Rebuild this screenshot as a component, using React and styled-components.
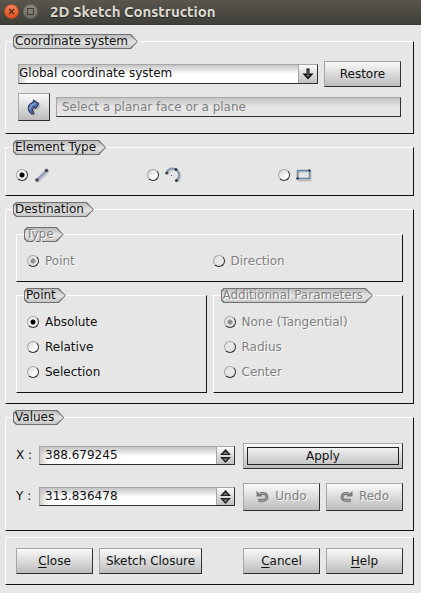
import React, { useState } from "react";
import styled, { createGlobalStyle, css } from "styled-components";

const GlobalStyle = createGlobalStyle`
  *, *::before, *::after { box-sizing: border-box; }
  body {
    margin: 0;
    background: #e6e6e6;
    color: #111;
    font: 12px/15px "DejaVu Sans", sans-serif;
  }
  button, input, select { font: inherit; color: inherit; margin: 0; border-radius: 0; }
`;

const sunken = css`
  border: 1px solid;
  border-color: #a6a6a6 #303030 #303030 #a6a6a6;
`;

const face = css`
  ${sunken}
  background: linear-gradient(#fafafa, #bcbcbc);
`;

const well = css`
  ${sunken}
  background: linear-gradient(#c4c4c4, rgba(255, 255, 255, 0) 9px),
    linear-gradient(90deg, #d0d0d0, #fff 9px);
`;

const etched = css`
  color: #808080;
  text-shadow: 1px 1px 0 #fafafa;
`;

const Dialog = styled.main`
  display: flex;
  flex-direction: column;
`;

const TitleBar = styled.header`
  display: flex;
  align-items: center;
  gap: 4px;
  height: 25px;
  padding: 0 4px 2px;
  background: linear-gradient(#5a564e, #3e3d38);
`;

const WindowButton = styled.button`
  display: flex;
  align-items: center;
  justify-content: center;
  width: 15px;
  height: 15px;
  padding: 0;
  border: 1px solid ${(p) => (p.$close ? "#b54722" : "#6e6b63")};
  && { border-radius: 50%; }
  background: ${(p) =>
    p.$close ? "linear-gradient(#f5825b, #e2511f)" : "linear-gradient(#8b8880, #737068)"};
`;

const Title = styled.h1`
  margin: 0 0 0 8px;
  color: #dfdbd2;
  font: bold 15px/20px Ubuntu, "Open Sans", sans-serif;
  text-shadow: 0 1px 1px #222;
`;

const Body = styled.form`
  display: flex;
  flex-direction: column;
  gap: 6px;
  padding: 9px 7px 8px 5px;
`;

const frame = css`
  border: 1px solid;
  border-color: #fff #111 #111 #fff;
`;

const Group = styled.fieldset`
  ${frame}
  min-width: 0;
  margin: 0;
  padding: ${(p) => p.$pad || 10}px;
`;

const Legend = styled.legend`
  position: relative;
  z-index: 0;
  height: 15px;
  margin-left: ${(p) => -(p.$pad || 10) + 7}px;
  padding: 0 10px 0 2px;
  line-height: 14px;
  ${(p) => p.$muted && etched}

  &::before, &::after {
    content: "";
    position: absolute;
    z-index: -1;
    inset: 0;
    background: #707070;
    clip-path: polygon(3px 0, calc(100% - 7px) 0, 100% 50%, calc(100% - 7px) 100%, 3px 100%, 0 calc(100% - 3px), 0 3px);
  }
  &::after {
    inset: 1px;
    background: linear-gradient(#bcbcbc, #e4e4e4 55%, #c6c6c6);
  }
`;

const Stack = styled.div`
  display: flex;
  flex-direction: column;
  gap: 6px;
`;

const Row = styled.div`
  display: flex;
  align-items: center;
  gap: 6px;
`;

const Columns = styled.div`
  display: grid;
  grid-template-columns: repeat(${(p) => p.$count}, minmax(0, 1fr));
  gap: 6px;
`;

const Button = styled.button`
  ${face}
  display: flex;
  align-items: center;
  justify-content: center;
  gap: 6px;
  width: ${(p) => p.$width || 77}px;
  height: ${(p) => p.$height || 26}px;
  padding: 0;
  white-space: nowrap;
  &:disabled { ${etched} }
`;

const DefaultButton = styled(Button)`
  width: 100%;
  padding: 3px;
`;

const DefaultRing = styled.span`
  flex: 1;
  height: 18px;
  border: 1px solid #222;
  line-height: 16px;
`;

const SelectBox = styled.div`
  ${well}
  display: grid;
  grid-template-columns: 1fr 19px;
  flex: 1;
  height: 20px;
`;

const Select = styled.select`
  grid-area: 1 / 1 / 2 / 3;
  appearance: none;
  width: 100%;
  padding: 0 20px 2px 0;
  border: 0;
  background: none;
`;

const SelectArrow = styled.span`
  grid-area: 1 / 2;
  display: flex;
  align-items: center;
  justify-content: center;
  border-left: 1px solid #a6a6a6;
  background: linear-gradient(#fafafa, #c0c0c0);
  pointer-events: none;
`;

const FaceInput = styled.input`
  ${sunken}
  flex: 1;
  min-width: 0;
  height: 20px;
  padding: 0 5px 1px;
  background: linear-gradient(#c4c4c4, #e6e6e6 9px);
  &::placeholder { color: #808080; opacity: 1; }
`;

const Option = styled.label`
  display: flex;
  align-items: ${(p) => (p.$icon ? "center" : "flex-start")};
  gap: 6px;
  height: ${(p) => (p.$icon ? 20 : 19)}px;
  line-height: 18px;
  ${(p) => p.$muted && etched}
`;

const Radio = styled.input`
  ${sunken}
  && { border-radius: 50%; }
  appearance: none;
  flex: none;
  width: 12px;
  height: 12px;
  margin: ${(p) => (p.$icon ? 0 : 3)}px 0 0;
  background: linear-gradient(135deg, #d4d4d4, #fff 70%);
  &:disabled { background: #e6e6e6; }
  &:checked { background: radial-gradient(circle, #000 2px, #f0f0f0 3px); }
  &:checked:disabled { background: radial-gradient(circle, #909090 2px, #e6e6e6 3px); }
`;

const Values = styled.div`
  display: grid;
  grid-template-columns: minmax(0, 219fr) minmax(0, 160fr);
  grid-template-rows: 41px 41px;
  column-gap: 8px;
  align-items: center;
  padding-bottom: 3px;
`;

const Field = styled.div`
  display: grid;
  grid-template-columns: 23px 1fr;
  align-items: center;
`;

const Spin = styled.div`
  ${well}
  display: flex;
  height: 19px;
`;

const SpinInput = styled.input`
  flex: 1;
  min-width: 0;
  padding: 0 5px 1px;
  border: 0;
  background: none;
`;

const SpinButtons = styled.div`
  display: flex;
  flex-direction: column;
  width: 18px;
  border-left: 1px solid #a6a6a6;
  background: linear-gradient(#fafafa, #c0c0c0);
`;

const SpinButton = styled.button`
  display: flex;
  justify-content: center;
  align-items: ${(p) => (p.$down ? "flex-start" : "flex-end")};
  flex: 1;
  padding: 0;
  border: 0;
  background: none;
`;

const Actions = styled.footer`
  ${frame}
  display: flex;
  gap: 6px;
  padding: 10px;
`;

const Spacer = styled.span`
  flex: 1;
`;

const Key = styled.span`
  text-decoration: underline;
  text-underline-offset: 2px;
`;

const CloseIcon = () => (
  <svg width="7" height="7" viewBox="0 0 7 7" aria-hidden="true">
    <path d="M1 1l5 5M6 1L1 6" stroke="#4b2a1c" strokeWidth="1.2" />
  </svg>
);

const MaximizeIcon = () => (
  <svg width="7" height="7" viewBox="0 0 7 7" aria-hidden="true">
    <rect x="0.5" y="0.5" width="6" height="6" fill="none" stroke="#3b3a36" />
  </svg>
);

const DownArrowIcon = () => (
  <svg width="12" height="12" viewBox="0 0 12 12" aria-hidden="true">
    <path d="M4.500 .5h3v5h4L6 11.500 .5 5.500h4z" fill="#111" />
    <path d="M5.500 2h1v5h1.500L6 9 4 7h1.500z" fill="#777" />
  </svg>
);

const PickIcon = () => (
  <svg width="16" height="18" viewBox="0 0 16 18" aria-hidden="true">
    <path d="M6 17C0 12 2 6 8 5V2l6 5-4 5V9c-2 1-3 4-1 7z" transform="translate(1 1)" fill="#888" opacity=".45" />
    <path d="M5.500 16C1 13 1 5.500 7 4.500L7.500 2 13 5.500 9.500 11 8.500 9C6 10 6.500 13 8 15.500z" fill="#4d68a8" stroke="#262c44" />
    <path d="M4 11.500C4 8 6 6 10 5.500" fill="none" stroke="#86a0d6" strokeWidth="1.500" />
  </svg>
);

const LineIcon = () => (
  <svg width="16" height="16" viewBox="0 0 16 16" aria-hidden="true">
    <g strokeLinecap="round">
      <path d="M4 14.500L14 4.500" stroke="#cacaca" strokeWidth="3" />
      <path d="M3 13L12.500 3.500" stroke="#8fa3b9" strokeWidth="2.500" />
    </g>
    <circle cx="3" cy="13" r="1.800" fill="#454b54" />
    <circle cx="12.500" cy="3.500" r="1.800" fill="#454b54" />
  </svg>
);

const ArcIcon = () => (
  <svg width="18" height="16" viewBox="0 0 18 16" aria-hidden="true">
    <path d="M3 7C5 1 13 1 15 7c1 3 0 5-2 8" fill="none" stroke="#c6c6c6" strokeWidth="2" />
    <path d="M1.500 6C3.500 0 10 .5 12.500 4c2.500 3 2 6-.500 9" fill="none" stroke="#819bb6" strokeWidth="2" />
    <circle cx="1.800" cy="6" r="1.600" fill="#3c424b" />
    <circle cx="11" cy="2.500" r="1.600" fill="#3c424b" />
    <circle cx="11.500" cy="13.500" r="1.600" fill="#3c424b" />
    <path d="M6 8h1v1H6z" fill="#444" />
  </svg>
);

const RectangleIcon = () => (
  <svg width="16" height="16" viewBox="0 0 16 16" aria-hidden="true">
    <path d="M2.500 4.500h12v9h-12z" fill="none" stroke="#c0c0c0" strokeWidth="2" />
    <path d="M1.500 3.500h12v8h-12z" fill="none" stroke="#6685a8" strokeWidth="1.500" />
    <circle cx="13.500" cy="3.500" r="1.200" fill="#333b46" />
    <circle cx="1.500" cy="11.500" r="1.200" fill="#333b46" />
  </svg>
);

const CurlIcon = ({ redo }) => (
  <svg width="13" height="13" viewBox="0 0 13 13" aria-hidden="true">
    <g transform={redo ? "matrix(-1 0 0 1 13 0)" : undefined} fill="none">
      <path d="M3 12C8 13.500 12.300 11 12.300 7" stroke="#b8b8b8" />
      <path d="M2 10.300H7C12 10 12 3.500 7 3.500H4" stroke="#7a7a7a" strokeWidth="3" />
      <path d="M.500 1v5.500H7L5 4.500z" fill="#7a7a7a" />
      <path d="M2.500 10.300H7C11.500 10 11.500 3.500 7 3.500H3" stroke="#a6a6a6" />
    </g>
  </svg>
);

const Triangle = ({ down }) => (
  <svg width="11" height="8" viewBox="0 0 11 8" aria-hidden="true">
    <path d={down ? "M0 1h11L5.500 7z" : "M5.500 1L11 7H0z"} fill="#222" />
    <path d={down ? "M3 2.500h5L5.500 5z" : "M5.500 3.500L8 6H3z"} fill="#777" />
  </svg>
);

function RadioOption({ name, label, icon, checked, onPick, muted }) {
  return (
    <Option $icon={!!icon} $muted={muted}>
      <Radio
        type="radio"
        name={name}
        $icon={!!icon}
        aria-label={icon ? label : undefined}
        checked={checked}
        onChange={() => onPick(label)}
        disabled={muted}
      />
      {icon || label}
    </Option>
  );
}

function RadioSet({ name, options, initial, muted }) {
  const [value, setValue] = useState(initial);
  return options.map(({ label, icon }) => (
    <RadioOption
      key={label}
      name={name}
      label={label}
      icon={icon}
      muted={muted}
      checked={label === value}
      onPick={setValue}
    />
  ));
}

function Coordinate({ id, label, initial }) {
  const [value, setValue] = useState(initial);
  const step = (n) => setValue((v) => (parseFloat(v) + n).toFixed(6));
  return (
    <Field>
      <label htmlFor={id}>{label} :</label>
      <Spin>
        <SpinInput id={id} type="text" value={value} onChange={(e) => setValue(e.target.value)} />
        <SpinButtons>
          <SpinButton type="button" aria-label={`Increase ${label}`} onClick={() => step(1)}>
            <Triangle />
          </SpinButton>
          <SpinButton type="button" $down aria-label={`Decrease ${label}`} onClick={() => step(-1)}>
            <Triangle down />
          </SpinButton>
        </SpinButtons>
      </Spin>
    </Field>
  );
}

const elementTypes = [
  { label: "Line", icon: <LineIcon /> },
  { label: "Arc", icon: <ArcIcon /> },
  { label: "Rectangle", icon: <RectangleIcon /> },
];
const types = [{ label: "Point" }, { label: "Direction" }];
const points = [{ label: "Absolute" }, { label: "Relative" }, { label: "Selection" }];
const parameters = [{ label: "None (Tangential)" }, { label: "Radius" }, { label: "Center" }];

export default function App() {
  return (
    <>
      <GlobalStyle />
      <Dialog>
        <TitleBar>
          <WindowButton type="button" $close aria-label="Close window">
            <CloseIcon />
          </WindowButton>
          <WindowButton type="button" aria-label="Maximize window">
            <MaximizeIcon />
          </WindowButton>
          <Title>2D Sketch Construction</Title>
        </TitleBar>
        <Body onSubmit={(e) => e.preventDefault()}>
          <Group $pad={12}>
            <Legend $pad={12}>Coordinate system</Legend>
            <Stack>
              <Row>
                <SelectBox>
                  <Select aria-label="Coordinate system">
                    <option>Global coordinate system</option>
                  </Select>
                  <SelectArrow>
                    <DownArrowIcon />
                  </SelectArrow>
                </SelectBox>
                <Button type="button">Restore</Button>
              </Row>
              <Row>
                <Button type="button" $width={32} $height={28} aria-label="Pick face">
                  <PickIcon />
                </Button>
                <FaceInput
                  type="text"
                  readOnly
                  aria-label="Planar face"
                  placeholder="Select a planar face or a plane"
                />
              </Row>
            </Stack>
          </Group>

          <Group>
            <Legend>Element Type</Legend>
            <Columns $count={3}>
              <RadioSet name="element" options={elementTypes} initial="Line" />
            </Columns>
          </Group>

          <Group>
            <Legend>Destination</Legend>
            <Stack>
              <Group disabled>
                <Legend $muted>Type</Legend>
                <Columns $count={2}>
                  <RadioSet name="type" options={types} initial="Point" muted />
                </Columns>
              </Group>
              <Columns $count={2}>
                <Group>
                  <Legend>Point</Legend>
                  <Stack>
                    <RadioSet name="point" options={points} initial="Absolute" />
                  </Stack>
                </Group>
                <Group disabled>
                  <Legend $muted>Additionnal Parameters</Legend>
                  <Stack>
                    <RadioSet
                      name="parameter"
                      options={parameters}
                      initial="None (Tangential)"
                      muted
                    />
                  </Stack>
                </Group>
              </Columns>
            </Stack>
          </Group>

          <Group>
            <Legend>Values</Legend>
            <Values>
              <Coordinate id="x-value" label="X" initial="388.679245" />
              <DefaultButton type="submit">
                <DefaultRing>Apply</DefaultRing>
              </DefaultButton>
              <Coordinate id="y-value" label="Y" initial="313.836478" />
              <Columns $count={2}>
                <Button type="button" $height={28} disabled>
                  <CurlIcon />
                  Undo
                </Button>
                <Button type="button" $height={28} disabled>
                  <CurlIcon redo />
                  Redo
                </Button>
              </Columns>
            </Values>
          </Group>

          <Actions>
            <Button type="button">
              <span><Key>C</Key>lose</span>
            </Button>
            <Button type="button" $width={103}>Sketch Closure</Button>
            <Spacer />
            <Button type="button">
              <span><Key>C</Key>ancel</span>
            </Button>
            <Button type="button">
              <span><Key>H</Key>elp</span>
            </Button>
          </Actions>
        </Body>
      </Dialog>
    </>
  );
}
